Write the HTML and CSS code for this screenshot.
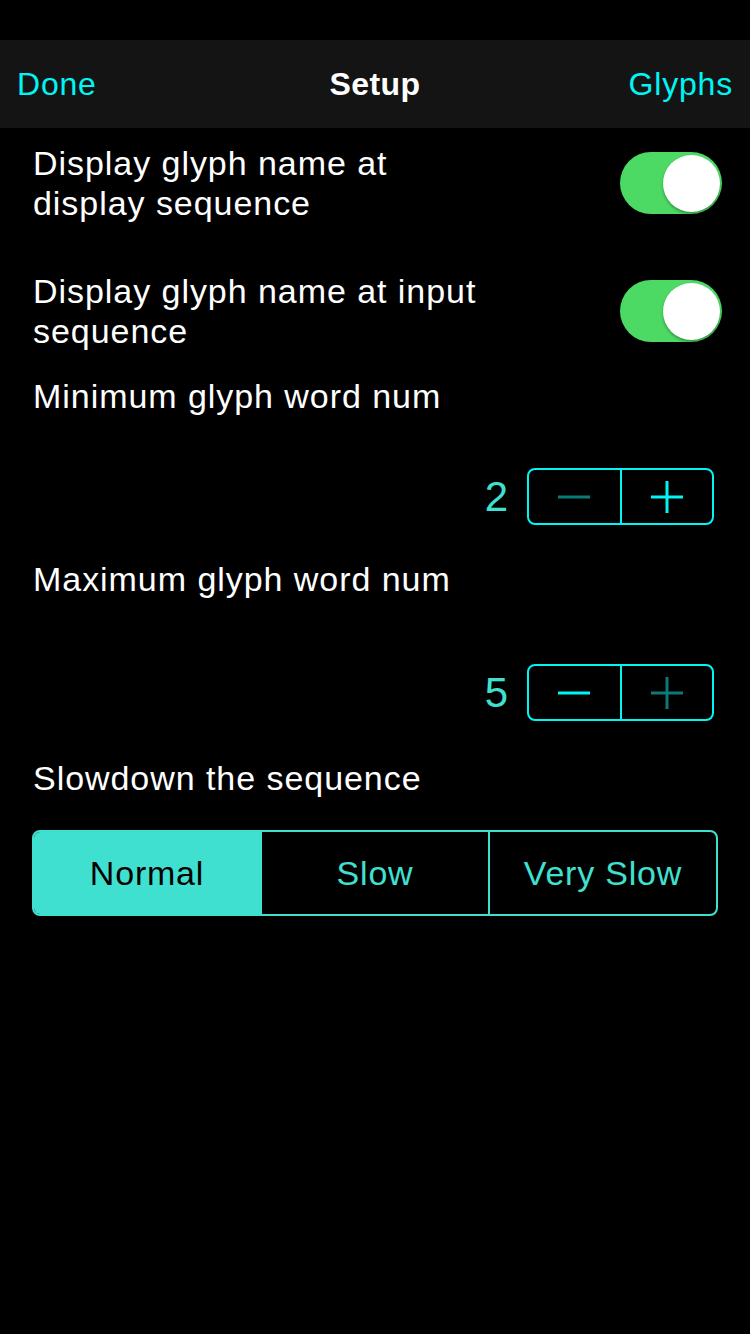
FILE: index.html
```html
<!DOCTYPE html>
<html>
<head>
<meta charset="utf-8">
<link rel="stylesheet" href="styles.css">
</head>
<body>
<div class="status"></div>
<header class="navbar">
  <span class="nav-btn">Done</span>
  <span class="nav-title">Setup</span>
  <span class="nav-btn">Glyphs</span>
</header>
<main class="content">
  <div class="switch-row row1">
    <div class="label">Display glyph name at<br>display sequence</div>
    <div class="toggle"><div class="knob"></div></div>
  </div>
  <div class="switch-row row2">
    <div class="label">Display glyph name at input<br>sequence</div>
    <div class="toggle"><div class="knob"></div></div>
  </div>
  <div class="label single min-label">Minimum glyph word num</div>
  <div class="stepper-row step1">
    <span class="value">2</span>
    <div class="stepper">
      <div class="step-btn dim"><svg width="32" height="4" viewBox="0 0 32 4"><rect width="32" height="3" y="0.5" fill="currentColor"/></svg></div>
      <div class="step-btn"><svg width="32" height="32" viewBox="0 0 32 32"><rect x="0" y="14.5" width="32" height="3" fill="currentColor"/><rect x="14.5" y="0" width="3" height="32" fill="currentColor"/></svg></div>
    </div>
  </div>
  <div class="label single max-label">Maximum glyph word num</div>
  <div class="stepper-row step2">
    <span class="value">5</span>
    <div class="stepper">
      <div class="step-btn"><svg width="32" height="4" viewBox="0 0 32 4"><rect width="32" height="3" y="0.5" fill="currentColor"/></svg></div>
      <div class="step-btn dim"><svg width="32" height="32" viewBox="0 0 32 32"><rect x="0" y="14.5" width="32" height="3" fill="currentColor"/><rect x="14.5" y="0" width="3" height="32" fill="currentColor"/></svg></div>
    </div>
  </div>
  <div class="label single slow-label">Slowdown the sequence</div>
  <div class="segmented">
    <div class="seg selected">Normal</div>
    <div class="seg">Slow</div>
    <div class="seg">Very Slow</div>
  </div>
</main>
</body>
</html>
```
FILE: styles.css
```css
html, body {
  margin: 0;
  padding: 0;
  background: #000;
}
body {
  width: 750px;
  height: 1334px;
  font-family: "Liberation Sans", Arial, sans-serif;
  color: #fff;
  overflow: hidden;
}
.status {
  height: 40px;
  background: #000;
}
.navbar {
  height: 88px;
  background: #141414;
  display: flex;
  align-items: center;
  justify-content: space-between;
  padding: 0 17px 0 17px;
  position: relative;
  font-size: 32px;
  letter-spacing: 0.8px;
}
.nav-btn {
  color: #00f5f5;
}
.nav-title {
  position: absolute;
  left: 0;
  right: 0;
  text-align: center;
  font-weight: bold;
  color: #fff;
  letter-spacing: 0.4px;
  pointer-events: none;
}
.content {
  padding: 15px 28px 0 33px;
}
.label {
  font-size: 34px;
  line-height: 40px;
  letter-spacing: 0.95px;
  color: #fff;
}
.switch-row {
  display: flex;
  align-items: center;
  justify-content: space-between;
}
.row2 {
  margin-top: 48px;
}
.toggle {
  width: 102px;
  height: 62px;
  border-radius: 31px;
  background: #4cd964;
  display: flex;
  align-items: center;
  justify-content: flex-end;
  padding-right: 2px;
  box-sizing: border-box;
}
.knob {
  width: 57px;
  height: 57px;
  border-radius: 50%;
  background: #fff;
  box-shadow: 0 2px 3px rgba(0,0,0,0.3);
}
.min-label {
  margin-top: 25px;
}
.stepper-row {
  display: flex;
  justify-content: flex-end;
  align-items: center;
  padding-right: 8px;
  gap: 19px;
}
.step1 {
  margin-top: 52px;
}
.max-label {
  margin-top: 34px;
}
.step2 {
  margin-top: 65px;
}
.value {
  font-size: 42px;
  line-height: 57px;
  color: #40e0d0;
}
.stepper {
  display: flex;
  width: 187px;
  height: 57px;
  border: 2px solid #00f5f5;
  border-radius: 8px;
  box-sizing: border-box;
}
.step-btn {
  flex: 1;
  display: flex;
  align-items: center;
  justify-content: center;
  color: #00f5f5;
}
.step-btn + .step-btn {
  border-left: 2px solid #00f5f5;
}
.step-btn.dim {
  color: #087a78;
}
.slow-label {
  margin-top: 37px;
}
.segmented {
  margin-top: 32px;
  margin-right: 4px;
  margin-left: -1px;
  display: flex;
  height: 86px;
  border: 2px solid #40e0d0;
  border-radius: 8px;
  overflow: hidden;
  box-sizing: border-box;
}
.seg {
  flex: 1;
  display: flex;
  align-items: center;
  justify-content: center;
  font-size: 34px;
  letter-spacing: 0.8px;
  color: #40e0d0;
}
.seg + .seg {
  border-left: 2px solid #40e0d0;
}
.seg.selected {
  background: #40e0d0;
  color: #000;
}
```
